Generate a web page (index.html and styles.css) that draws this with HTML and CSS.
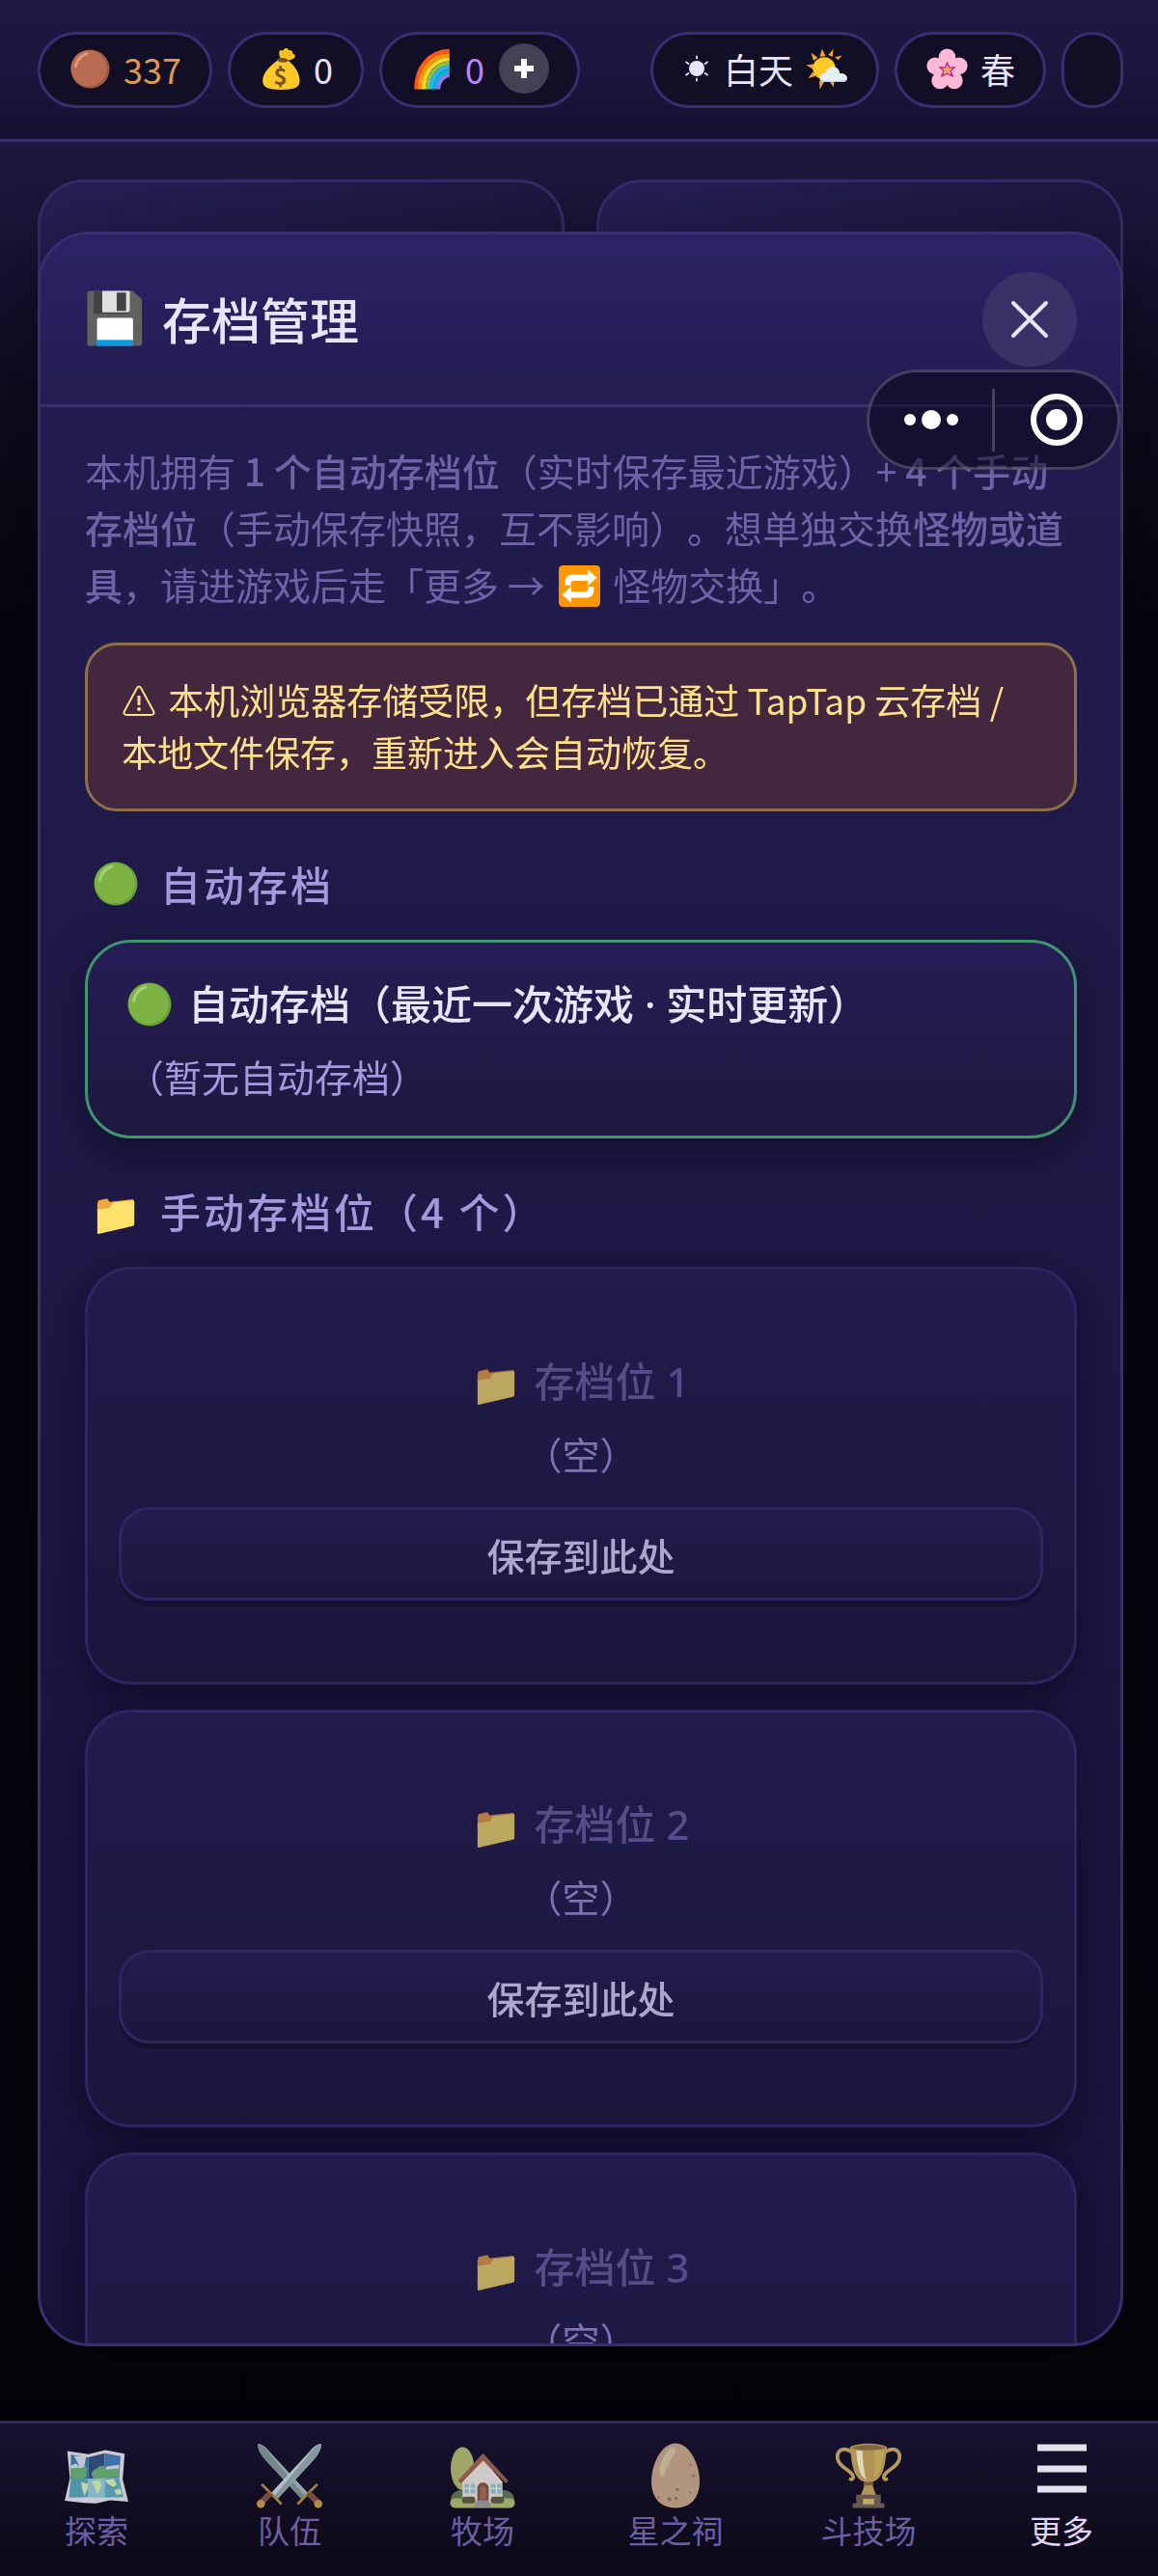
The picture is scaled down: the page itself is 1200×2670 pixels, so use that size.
FILE: index.html
```html
<!DOCTYPE html>
<html lang="zh-CN">
<head>
    <meta charset="UTF-8">
    <meta name="viewport" content="width=device-width, initial-scale=1.0">
    <title>存档管理</title>
    <link rel="stylesheet" href="styles.css">
</head>
<body>
    <svg class="sprite" aria-hidden="true">
        <symbol id="i-folder" viewBox="0 0 128 128">
            <path d="M13 44l3-9 24-5 7 9 65-7 3 8v12L13 64z" fill="#f2a53f"/>
            <path d="M13 62c0-2 2-3 4-3l27-3c3 0 5-1 6-4l3-7c1-2 3-3 5-4l53-6c3 0 4 1 4 4v61c0 3-1 5-4 6l-95 22c-2 0-3-1-3-3z" fill="#ffe36c"/>
        </symbol>
        <symbol id="i-green" viewBox="0 0 128 128">
            <circle cx="64" cy="64" r="60" fill="#689f38"/>
            <circle cx="61" cy="62" r="56" fill="#7cb342"/>
            <path d="M20 54c4-19 17-33 33-38" fill="none" stroke="#a6cf77" stroke-width="8" stroke-linecap="round"/>
        </symbol>
    </svg>

    <header class="topbar">
        <div class="chips">
            <span class="chip chip-egg">
                <svg class="emoji" viewBox="0 0 128 128"><circle cx="64" cy="64" r="57" fill="#9d5943"/><circle cx="60" cy="62" r="53" fill="#b96c52"/><path d="M21 56c4-19 17-32 32-37" fill="none" stroke="#e09a80" stroke-width="9" stroke-linecap="round"/></svg>
                337
            </span>
            <span class="chip">
                <svg class="emoji" viewBox="0 0 128 128"><path d="M66 38c-4-12-8-22-4-28 4-5 8 3 12-3 4-6 14-5 14 2 8-2 14 3 12 10 8 0 10 8 4 14-6 5-18 6-24 9z" fill="#fbc11b"/><path d="M54 36c10-8 32-4 34 4-8 6-26 6-34-4z" fill="#7a4f24"/><path d="M55 39c10 7 25 7 33 1 20 16 33 38 33 58 0 20-14 27-54 27S12 118 12 98c0-20 20-43 43-59z" fill="#ffca28"/><text x="64" y="110" text-anchor="middle" class="coin">$</text></svg>
                0
            </span>
            <span class="chip chip-rainbow">
                <svg class="emoji" viewBox="0 0 128 128" fill="none" stroke-width="12"><path d="M18 124C18 58 58 12 116 11" stroke="#ff5722"/><path d="M29 124C29 64 64 24 116 23" stroke="#ff9800"/><path d="M40 124C40 72 72 36 116 35" stroke="#fdd835"/><path d="M51 124C51 80 80 48 116 47" stroke="#8bc34a"/><path d="M62 124C62 88 86 60 116 59" stroke="#29b6f6"/><path d="M73 124C73 95 94 72 116 71" stroke="#00b8d4"/><path d="M83 124C83 100 99 83 116 82" stroke="#9575f0"/></svg>
                0
                <button class="plus" type="button" aria-label="充值"><svg viewBox="0 0 22 22"><path d="M11 1v20M1 11h20" stroke="#fff" stroke-width="6"/></svg></button>
            </span>
        </div>
        <div class="chips">
            <span class="chip">
                <svg class="sun" viewBox="0 0 36 36"><circle cx="18" cy="18" r="9" fill="#e9e4ff"/><path d="M18 3v4M18 29v4M5 10l4 3M27 23l4 3M5 26l4-3M27 13l4-3" stroke="#e9e4ff" stroke-width="2"/></svg>
                白天
                <svg class="emoji" viewBox="0 0 128 128"><path d="M51 4l10 22-17 2zM18 16l20 14-12 10zM4 52l24-2-2 16zM10 92l14-20 9 12zM44 124l-1-26 16 1zM84 6l-2 22-13-5zM110 24l-12 14-9-9zM84 118l-12-20 16-1z" fill="#f8a12b"/><circle cx="57" cy="62" r="33" fill="#ffc928"/><path d="M44 92c0-10 8-16 17-15 2-14 14-23 27-19 9 2 15 10 15 19 13-1 22 6 22 14s-7 11-15 11H58c-8 0-14-3-14-10z" fill="#e5f0f3"/><path d="M46 97c18 4 60 4 78-2-2 5-8 7-14 7H58c-6 0-10-1-12-5z" fill="#b4cfd8"/></svg>
            </span>
            <span class="chip">
                <svg class="emoji" viewBox="0 0 128 128"><g fill="#ffb8d5"><circle cx="64" cy="29" r="25"/><circle cx="29" cy="55" r="25"/><circle cx="99" cy="55" r="25"/><circle cx="43" cy="98" r="25"/><circle cx="85" cy="98" r="25"/><circle cx="64" cy="66" r="28"/></g><path d="M64 46l6 14 15-1-11 11 6 15-16-8-16 8 6-15-11-11 15 1z" fill="none" stroke="#c2286c" stroke-width="4"/><circle cx="64" cy="67" r="8" fill="#f5a04a"/></svg>
                春
            </span>
            <span class="chip"></span>
        </div>
    </header>

    <main class="page">
        <div class="card"></div>
        <div class="card"></div>
    </main>

    <div class="overlay">
        <section class="modal" role="dialog" aria-labelledby="modal-title">
            <div class="modal-head">
                <h1 id="modal-title">
                    <svg viewBox="0 0 128 128"><path d="M10 5h92l20 18v94c0 4-2 6-6 6H11c-4 0-6-2-6-6V11c0-4 2-6 5-6z" fill="#616161"/><path d="M19 5h76v44c0 3-2 5-5 5H19z" fill="#424242"/><path d="M37 5h59v41c0 3-2 5-5 5H37z" fill="#e0e0e0"/><path d="M68 9h20v39H68z" fill="#424242"/><path d="M26 67c0-3 2-4 4-4h69c3 0 4 2 4 4v45H26z" fill="#fff"/><path d="M25 110h78v13H25z" fill="#0f9ae0"/></svg>
                    存档管理
                </h1>
                <button class="close" type="button" aria-label="关闭"><svg viewBox="0 0 40 40"><path d="M3 3l34 34M37 3L3 37" stroke="#e9e4ff" stroke-width="4" stroke-linecap="round"/></svg></button>
            </div>
            <div class="modal-body">
                <p class="intro">本机拥有 <b>1 个自动存档位</b>（实时保存最近游戏）+ <b>4 个手动存档位</b>（手动保存快照，互不影响）。想单独交换<b>怪物或道具</b>，请进游戏后走「更多 → <svg class="swap" viewBox="0 0 128 128"><rect x="3" y="3" width="122" height="122" rx="12" fill="#ff9800"/><path d="M22 62V52c0-14 8-22 22-22h44V14l27 25-27 25V48H46c-5 0-7 3-7 8v6z" fill="#fff"/><path d="M106 66v10c0 14-8 22-22 22H40v16L13 89l27-25v16h42c5 0 7-3 7-8v-6z" fill="#fff"/></svg> 怪物交换」。</p>

                <p class="warning"><svg viewBox="0 0 36 36"><path d="M16 4q2-3 4 0l13 24q2 4-3 4H6q-5 0-3-4z" fill="none" stroke="#ffe08a" stroke-width="2"/><path d="M18 12v10" stroke="#ffe08a" stroke-width="3"/><circle cx="18" cy="26" r="2" fill="#ffe08a"/></svg> 本机浏览器存储受限，但存档已通过 TapTap 云存档 / 本地文件保存，重新进入会自动恢复。</p>

                <h2><svg><use href="#i-green"/></svg>自动存档</h2>
                <div class="save save-auto">
                    <h3><svg><use href="#i-green"/></svg>自动存档（最近一次游戏 · 实时更新）</h3>
                    <p>（暂无自动存档）</p>
                </div>

                <h2><svg><use href="#i-folder"/></svg>手动存档位（4 个）</h2>
                <div class="slots">
                    <div class="save save-empty">
                        <h3><svg><use href="#i-folder"/></svg>存档位 1</h3>
                        <p>（空）</p>
                        <button type="button">保存到此处</button>
                    </div>
                    <div class="save save-empty">
                        <h3><svg><use href="#i-folder"/></svg>存档位 2</h3>
                        <p>（空）</p>
                        <button type="button">保存到此处</button>
                    </div>
                    <div class="save save-empty">
                        <h3><svg><use href="#i-folder"/></svg>存档位 3</h3>
                        <p>（空）</p>
                        <button type="button">保存到此处</button>
                    </div>
                </div>
            </div>
        </section>
    </div>

    <div class="capsule">
        <button type="button" aria-label="菜单"><svg viewBox="0 0 56 24" fill="#fff"><circle cx="6" cy="12" r="6"/><circle cx="28" cy="12" r="10"/><circle cx="50" cy="12" r="6"/></svg></button>
        <button type="button" aria-label="退出"><svg viewBox="0 0 56 56"><circle cx="28" cy="28" r="24" fill="none" stroke="#fff" stroke-width="6"/><circle cx="28" cy="28" r="11" fill="#fff"/></svg></button>
    </div>

    <nav class="tabs">
        <a href="#explore">
            <svg viewBox="0 0 128 128"><path d="M7 16l41 6 33-8 38 7-4 50 11 44-36-3-27 6-22-1-39-4 10-44z" fill="#cbc9d2"/><path d="M14 23l34 5v42l-34 1z" fill="#3b6d9f"/><path d="M48 28l32-8v48l-32 2z" fill="#2c4a78"/><path d="M80 20l31 6-3 42-28 0z" fill="#3d73aa"/><path d="M14 71l34-1v36l-38 1z" fill="#4f93a8"/><path d="M48 70l32-2v39l-32 0z" fill="#85b6c8"/><path d="M80 68h28l9 38-37 1z" fill="#559aaf"/><path d="M14 48c6-8 14 2 20-4s10 4 12 6l-2 16-10 6-18-3zM54 62c2-12 12-10 14-16l12-2v24l-22 2zM80 50c8-8 22-6 28-2v18l-28 2z" fill="#5fa06e"/><path d="M20 26h24l-4 20-8 4-6-14zM14 44l10-4 8 8-18 2zM84 46l24-3v7l-26 2z" fill="#c0c6d2"/><path d="M34 76l14 4-2 12-6 12-4-14zM54 75l16-2 4 10-8 18-6-14zM80 72l18-2 6 12-8 4-12-8zM98 92l12-3 4 10-10 3z" fill="#bed6a4"/></svg>
            探索
        </a>
        <a href="#team">
            <svg viewBox="0 0 128 128"><path d="M2 2c8 0 16 6 22 14l76 82-12 12L14 30C6 20 2 12 2 2z" fill="#94a5a9"/><path d="M2 2c10 3 16 10 22 18l70 84-6 6L14 30C6 20 2 12 2 2z" fill="#74878d"/><path d="M117 82l-36 36" stroke="#a57f3f" stroke-width="5" stroke-linecap="round"/><path d="M101 98l20 20" stroke="#744b3e" stroke-width="12"/><circle cx="120" cy="119" r="8" fill="#b68b45"/><g transform="matrix(-1 0 0 1 128 0)"><path d="M2 2c8 0 16 6 22 14l76 82-12 12L14 30C6 20 2 12 2 2z" fill="#b0c0c3"/><path d="M2 2c10 3 16 10 22 18l70 84-6 6L14 30C6 20 2 12 2 2z" fill="#85989d"/><path d="M117 82l-36 36" stroke="#a57f3f" stroke-width="5" stroke-linecap="round"/><path d="M101 98l20 20" stroke="#744b3e" stroke-width="12"/><circle cx="120" cy="119" r="8" fill="#b68b45"/></g></svg>
            队伍
        </a>
        <a href="#ranch">
            <svg viewBox="0 0 128 128"><ellipse cx="25" cy="50" rx="23" ry="42" fill="#9fa667"/><path d="M2 112c0-12 8-20 22-20h80c14 0 22 8 22 20z" fill="#586b4b"/><rect x="1" y="108" width="126" height="19" rx="9" fill="#9da96b"/><path d="M25 76l40-44 38 44v40H25z" fill="#cfcac9"/><path d="M16 74l49-54 49 54-4 5-45-44-43 44z" fill="#8e5948"/><path d="M54 116V88c0-14 22-14 22 0v28z" fill="#764c41"/><path d="M59 110V90c0-7 12-7 12 0v20z" fill="#926152"/><path d="M29 80h21v19H29zM80 80h21v19H80z" fill="#8cb0bc"/><path d="M39 80v19M29 89h21M91 80v19M80 89h21" stroke="#ddd" stroke-width="2"/><rect x="24" y="105" width="26" height="13" rx="6" fill="#575336"/><rect x="80" y="105" width="26" height="13" rx="6" fill="#575336"/><path d="M52 112h24l5 13H49z" fill="#8b8994"/></svg>
            牧场
        </a>
        <a href="#shrine">
            <svg viewBox="0 0 128 128"><path d="M64 1c28 0 47 42 47 74 0 33-18 52-47 52S17 108 17 75C17 43 36 1 64 1z" fill="#b2957f"/><path d="M33 54c2-18 10-34 20-42 8-5 14 0 10 8-8 13-15 24-20 40-3 10-11 6-10-6z" fill="#bfae91"/><g fill="#87685c"><circle cx="93" cy="43" r="2"/><circle cx="99" cy="64" r="3"/><circle cx="68" cy="91" r="3"/><circle cx="93" cy="97" r="2"/><circle cx="52" cy="110" r="4"/><circle cx="65" cy="108" r="3"/><circle cx="31" cy="106" r="2"/></g></svg>
            星之祠
        </a>
        <a href="#arena">
            <svg viewBox="0 0 128 128"><path d="M32 18C14 6 0 16 4 32c3 14 18 18 28 29 4 6 2 11-3 10M96 18c18-12 32-2 28 14-3 14-18 18-28 29-4 6-2 11 3 10" fill="none" stroke="#b49a5e" stroke-width="7" stroke-linecap="round"/><path d="M28 8c14-9 58-9 72 0-3 26-4 62-28 68 0 12 4 18 8 27H48c4-9 8-15 8-27C32 70 31 34 28 8z" fill="#b29358"/><path d="M40 15c2 27 5 47 19 57-4-18-6-36-7-57z" fill="#ddd8b5"/><path d="M76 14h18c-2 28-7 46-20 56 3-20 3-37 2-56z" fill="#b8a557"/><path d="M31 10c13-8 53-8 66 0-13 6-53 6-66 0z" fill="#83663b"/><path d="M55 76h18v7H55z" fill="#7a5a3a"/><path d="M40 101h48v17h7v9H33v-9h7z" fill="#675850"/><path d="M53 109h22v11H53z" fill="#c1aa62"/></svg>
            斗技场
        </a>
        <a class="active" href="#more">
            <svg viewBox="0 0 68 68"><path d="M9 5h51M9 27h51M9 48h51" stroke="#e4e1ee" stroke-width="7"/></svg>
            更多
        </a>
    </nav>
</body>
</html>
```
FILE: styles.css
```css
* { box-sizing: border-box; }
body {
    margin: 0;
    height: 100vh;
    display: flex;
    flex-direction: column;
    overflow: hidden;
    background: linear-gradient(#1d1740 140px, #1d173c 180px, #171030 280px, #0d0b1c 440px, #060510 640px, #04030a);
    color: #e9e4ff;
    font-family: "Noto Sans CJK SC", sans-serif;
    font-size: 36px;
    text-spacing-trim: space-all;
}
h1, h2, h3, p { margin: 0; }
button { font-family: inherit; padding: 0; border: none; cursor: pointer; }
svg { flex: none; }
.sprite { position: absolute; width: 0; height: 0; }

/* Top bar */
.topbar {
    display: flex;
    justify-content: space-between;
    padding: 33px 36px 32px 39px;
    border-bottom: 3px solid #3a2e72;
    background: linear-gradient(#1e1842, #1b163d 50%, #151030);
}
.chips { display: flex; gap: 16px; }
.chip {
    display: flex;
    align-items: center;
    gap: 12px;
    min-width: 64px;
    height: 79px;
    padding: 0 29px 3px;
    border: 3px solid #3a2e72;
    border-radius: 40px;
    background: #120e26;
    white-space: nowrap;
}
.chip-egg { color: #dd9a54; }
.chip-rainbow { color: #c184f5; }
.emoji { width: 45px; height: 45px; }
.sun { width: 32px; height: 36px; }
.coin { font-size: 68px; font-weight: 700; fill: #7a4f24; }
.plus {
    display: flex;
    align-items: center;
    justify-content: center;
    width: 52px;
    height: 52px;
    margin-left: 3px;
    border-radius: 50%;
    background: #454054;
}
.plus svg { width: 22px; height: 22px; }

/* Cards behind the dialog */
.page {
    flex: 1;
    display: grid;
    grid-template-columns: 1fr 1fr;
    gap: 33px;
    padding: 39px 36px 0 39px;
}
.card {
    height: 300px;
    border: 3px solid #352b69;
    border-radius: 48px;
    background: linear-gradient(160deg, #261f56, #1c163b 50%);
}

/* Dialog */
.overlay {
    position: fixed;
    inset: 0;
    padding: 240px 36px 238px 39px;
}
.modal {
    display: flex;
    flex-direction: column;
    height: 100%;
    overflow: hidden;
    border: 3px solid #3a2e72;
    border-radius: 54px;
    background: linear-gradient(#231c50, #201a49 30%, #17133a);
    box-shadow: 0 30px 90px rgba(0, 0, 0, 0.4);
}
.modal-head {
    display: flex;
    align-items: center;
    justify-content: space-between;
    flex: none;
    height: 179px;
    padding: 0 45px 0 46px;
    border-bottom: 3px solid #3a2e72;
    background: linear-gradient(#2c2266, #231c50);
}
.modal-head h1 {
    display: flex;
    align-items: center;
    gap: 18px;
    padding-bottom: 3px;
    font-size: 51px;
    font-weight: 500;
}
.modal-head h1 svg { width: 62px; height: 62px; }
.close {
    display: flex;
    align-items: center;
    justify-content: center;
    width: 98px;
    height: 98px;
    border-radius: 50%;
    background: #3a3168;
}
.close svg { width: 40px; height: 40px; }
.modal-body {
    flex: 1;
    min-height: 0;
    overflow: hidden;
    padding: 36px 45px 0 46px;
}
.intro {
    margin-bottom: 31px;
    color: #6f62a6;
    font-size: 39px;
    line-height: 59px;
}
.intro b { font-weight: 500; }
.swap { width: 45px; height: 45px; margin: 0 4px; vertical-align: -8px; }
.warning {
    padding: 29px 35px 32px;
    border: 3px solid #8d7049;
    border-radius: 33px;
    background: #43273e;
    color: #ffe08a;
    font-size: 37px;
    line-height: 54px;
}
.warning svg { width: 36px; height: 36px; margin-right: 4px; vertical-align: -4px; }
.modal-body h2 {
    display: flex;
    align-items: center;
    gap: 22px;
    margin: 43px 0 27px;
    padding-left: 8px;
    color: #a598dc;
    font-size: 42px;
    font-weight: 500;
    line-height: 63px;
    letter-spacing: 3px;
}
.modal-body h2 svg, .save h3 svg { width: 48px; height: 48px; }

.save {
    padding: 32px 40px;
    border: 3px solid #419470;
    border-radius: 48px;
    background: linear-gradient(#251d54, #1e183f);
    box-shadow: 0 12px 42px rgba(8, 6, 20, 0.55);
}
.save h3 {
    display: flex;
    align-items: center;
    gap: 16px;
    margin-bottom: 14px;
    font-family: "Noto Sans", "Noto Sans CJK SC", sans-serif;
    font-size: 42px;
    font-weight: 500;
    line-height: 63px;
}
.save p { color: #a598dc; font-size: 39px; line-height: 59px; }
.slots { display: flex; flex-direction: column; gap: 26px; }
.save-empty {
    padding: 84px 32px;
    border-color: #2e2662;
    background: linear-gradient(#221b4c, #1b163c);
    text-align: center;
}
.save-empty h3 { justify-content: center; color: #574c88; }
.save-empty h3 svg { opacity: 0.7; }
.save-empty p { color: #7e73b0; }
.save-empty button {
    display: block;
    width: 100%;
    height: 97px;
    margin-top: 26px;
    border: 3px solid #2e2662;
    border-radius: 32px;
    background: linear-gradient(#231c4e, #1c163c);
    box-shadow: 0 6px 0 #161131;
    color: #aea7cb;
    font-size: 39px;
    font-weight: 500;
}

/* Mini-app capsule */
.capsule {
    position: fixed;
    top: 383px;
    right: 39px;
    display: flex;
    align-items: center;
    width: 263px;
    height: 104px;
    border: 3px solid rgba(140, 135, 160, 0.4);
    border-radius: 52px;
    background: rgba(8, 6, 20, 0.5);
}
.capsule button {
    flex: 1;
    display: flex;
    align-items: center;
    justify-content: center;
    height: 65px;
    background: none;
}
.capsule button + button { border-left: 3px solid #47425c; }
.capsule svg { width: 56px; }

/* Bottom tabs */
.tabs {
    position: relative;
    display: grid;
    grid-template-columns: repeat(6, 1fr);
    border-top: 3px solid #2f265c;
    background: linear-gradient(#16122f, #0c0918);
}
.tabs a {
    display: flex;
    flex-direction: column;
    align-items: center;
    padding: 20px 0 25px;
    color: #6b5fa3;
    font-size: 33px;
    line-height: 45px;
    text-decoration: none;
}
.tabs a.active { color: #e3d3f8; }
.tabs svg { width: 68px; height: 68px; }
```
